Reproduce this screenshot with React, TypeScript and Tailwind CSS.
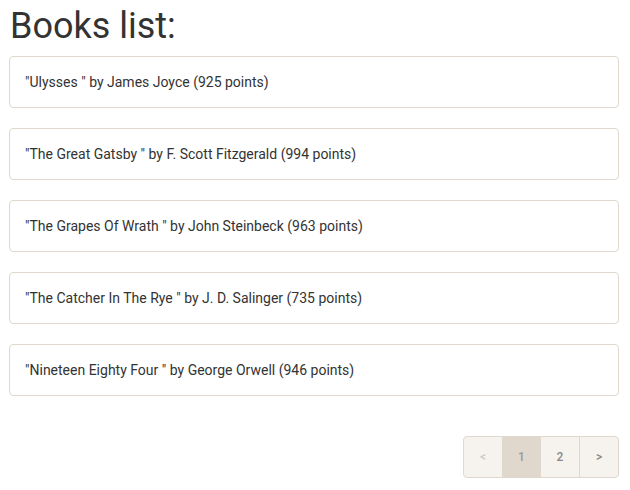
const books = [
  { title: "Ulysses", author: "James Joyce", points: 925 },
  { title: "The Great Gatsby", author: "F. Scott Fitzgerald", points: 994 },
  { title: "The Grapes Of Wrath", author: "John Steinbeck", points: 963 },
  { title: "The Catcher In The Rye", author: "J. D. Salinger", points: 735 },
  { title: "Nineteen Eighty Four", author: "George Orwell", points: 946 },
];

export default function App() {
  return (
    <div className="w-[630px] h-[490px] bg-white pl-[9px] pr-[11px] font-['Roboto',sans-serif] text-[#333]">
      <h1 className="pt-[6px] text-[36px] leading-[40px] text-[#333] pl-px">Books list:</h1>
      <div className="mt-[10px] flex flex-col gap-[20px]">
        {books.map((b) => (
          <div
            key={b.title}
            className="h-[52px] flex items-center rounded-[4px] border border-[#e0d8cc] px-[15px] text-[14px]"
          >
            "{b.title} " by {b.author} ({b.points} points)
          </div>
        ))}
      </div>
      <div className="mt-[40px] flex justify-end">
        <div className="flex h-[42px] rounded-[4px] border border-[#e0d8cc] bg-[#f6f3ee] text-[12px] font-medium text-[#888] overflow-hidden">
          <span className="w-[38px] flex items-center justify-center text-[#ccc]">&lt;</span>
          <span className="w-[39px] flex items-center justify-center bg-[#e0d8cc] text-[#999]">1</span>
          <span className="w-[39px] flex items-center justify-center border-r border-[#e0d8cc]">2</span>
          <span className="w-[38px] flex items-center justify-center">&gt;</span>
        </div>
      </div>
    </div>
  );
}
